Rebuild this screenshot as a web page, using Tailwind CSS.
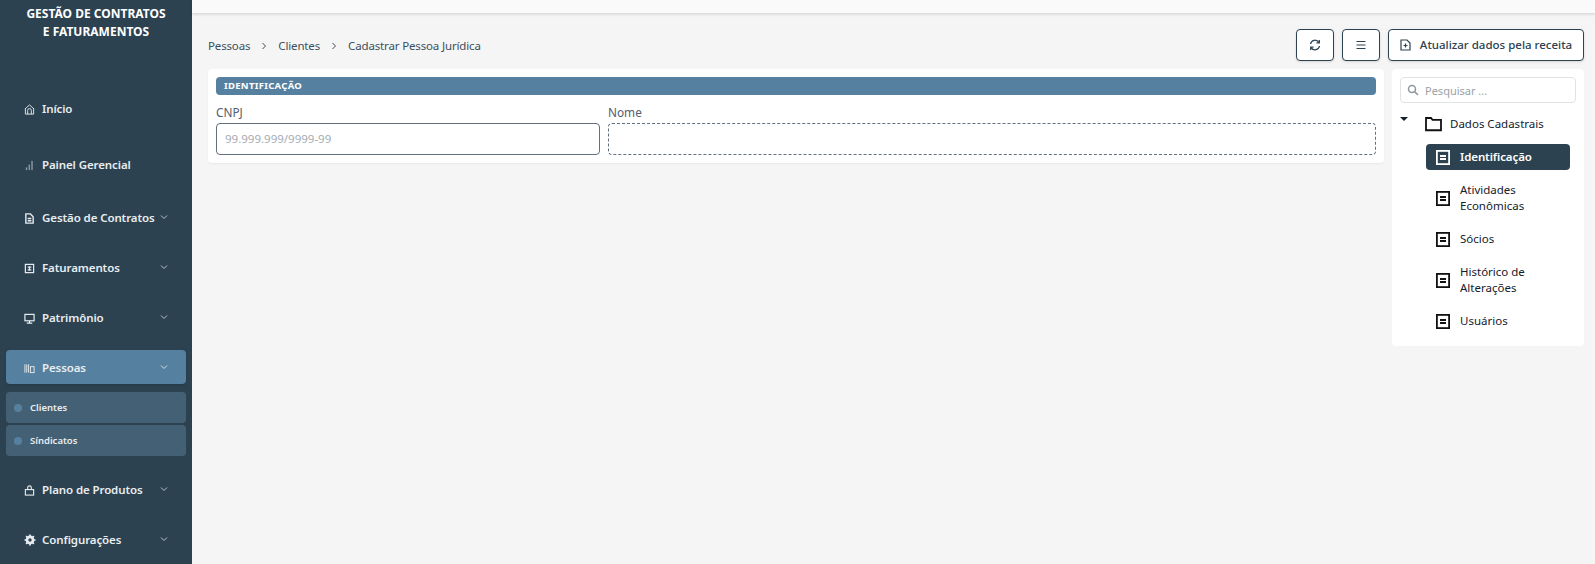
<!DOCTYPE html>
<html lang="pt-BR">
<head>
<meta charset="utf-8">
<script src="https://cdn.jsdelivr.net/npm/@tailwindcss/browser@4"></script>
</head>
<body class="m-0 overflow-hidden">
<div class="flex h-[564px] w-[1595px] bg-[#f5f5f5] font-['Noto_Sans','Open_Sans',sans-serif] text-[#2c4050]">
  <aside class="flex w-[192px] shrink-0 flex-col bg-[#2c4251] text-white">
    <div class="h-[91px] pt-[5px] text-center text-[12px] font-bold leading-[18px]">GESTÃO DE CONTRATOS<br>E FATURAMENTOS</div>
    <nav class="flex flex-col text-[11.5px] font-semibold tracking-[-0.1px] text-[#e8edf0]">
      <a class="flex h-[34px] items-center pl-[24px] pt-[2px]">
        <svg class="mr-[7px] h-[11px] w-[11px]" viewBox="0 0 12 12" fill="none" stroke="currentColor" stroke-width="1"><path d="M1 5.500 6 1l5 4.500M1.500 5v6h9V5M4 11V7a2 2 0 0 1 4 0v4"/></svg>Início</a>
      <a class="mt-[22px] flex h-[34px] items-center pl-[24px] pt-[2px]">
        <svg class="mr-[7px] h-[11px] w-[11px] text-[#8d9ba5]" viewBox="0 0 12 12" fill="currentColor"><rect x="2" y="8" width="1.500" height="3"/><rect x="5" y="5" width="1.500" height="6"/><rect x="8" y="1" width="1.500" height="10"/></svg>Painel Gerencial</a>
      <a class="mt-[19px] flex h-[34px] items-center pl-[24px] pt-[2px]">
        <svg class="mr-[7px] h-[11px] w-[11px]" viewBox="0 0 12 12" fill="none" stroke="currentColor" stroke-width="1.500"><path d="M2 1h5l3 3v7H2zM4 6h4M4 8.500h4"/></svg>Gestão de Contratos
        <svg class="-mt-[2px] ml-auto mr-[24px] h-[8px] w-[8px]" viewBox="0 0 8 8" fill="none" stroke="#b9c3ca" stroke-width="1"><path d="m1 2.500 3 3 3-3"/></svg></a>
      <a class="mt-[16px] flex h-[34px] items-center pl-[24px] pt-[2px]">
        <svg class="mr-[7px] h-[11px] w-[11px]" viewBox="0 0 12 12" fill="none" stroke="currentColor" stroke-width="1.300"><rect x="1.500" y="1.500" width="9" height="9"/><path d="M4 4.500h4M4 7.500h4M6 3.500v5"/></svg>Faturamentos
        <svg class="-mt-[2px] ml-auto mr-[24px] h-[8px] w-[8px]" viewBox="0 0 8 8" fill="none" stroke="#b9c3ca" stroke-width="1"><path d="m1 2.500 3 3 3-3"/></svg></a>
      <a class="mt-[16px] flex h-[34px] items-center pl-[24px] pt-[2px]">
        <svg class="mr-[7px] h-[11px] w-[11px]" viewBox="0 0 12 12" fill="none" stroke="currentColor" stroke-width="1.300"><rect x="1" y="1.500" width="10" height="7"/><path d="M6 8.500v2M3 11h6"/></svg>Patrimônio
        <svg class="-mt-[2px] ml-auto mr-[24px] h-[8px] w-[8px]" viewBox="0 0 8 8" fill="none" stroke="#b9c3ca" stroke-width="1"><path d="m1 2.500 3 3 3-3"/></svg></a>
      <a class="mx-[6px] mt-[16px] flex h-[34px] items-center rounded-[4px] bg-[#56809f] pl-[18px] pt-[2px] shadow-sm">
        <svg class="mr-[7px] h-[11px] w-[11px]" viewBox="0 0 12 12" fill="none" stroke="currentColor" stroke-width="1"><path d="M1 1.500v9M3 1.500v9M5 1.500v9"/><rect x="7" y="4" width="4" height="6.500"/></svg>Pessoas
        <svg class="-mt-[2px] ml-auto mr-[18px] h-[8px] w-[8px]" viewBox="0 0 8 8" fill="none" stroke="#d4dde4" stroke-width="1"><path d="m1 2.500 3 3 3-3"/></svg></a>
      <a class="mx-[6px] mt-[8px] flex h-[31px] items-center rounded-[4px] bg-[#436074] pl-[8px] pt-[1px] text-[9.500px] tracking-normal">
        <span class="mr-[8px] h-[8px] w-[8px] rounded-full bg-[#56809f]"></span>Clientes</a>
      <a class="mx-[6px] mt-[2px] flex h-[31px] items-center rounded-[4px] bg-[#436074] pl-[8px] pt-[1px] text-[9.500px] tracking-normal">
        <span class="mr-[8px] h-[8px] w-[8px] rounded-full bg-[#56809f]"></span>Síndicatos</a>
      <a class="mt-[16px] flex h-[34px] items-center pl-[24px] pt-[2px]">
        <svg class="mr-[7px] h-[11px] w-[11px]" viewBox="0 0 12 12" fill="none" stroke="currentColor" stroke-width="1.200"><rect x="1.500" y="5" width="9" height="6"/><path d="M4 5V3a2 2 0 0 1 4 0v2"/></svg>Plano de Produtos
        <svg class="-mt-[2px] ml-auto mr-[24px] h-[8px] w-[8px]" viewBox="0 0 8 8" fill="none" stroke="#b9c3ca" stroke-width="1"><path d="m1 2.500 3 3 3-3"/></svg></a>
      <a class="mt-[16px] flex h-[34px] items-center pl-[24px] pt-[2px]">
        <svg class="mr-[6px] h-[12px] w-[12px]" viewBox="0 0 12 12"><circle cx="6" cy="6" r="3.300" fill="none" stroke="currentColor" stroke-width="2.200"/><path d="M6 .5v11M.5 6h11M2.100 2.100l7.800 7.800M9.900 2.100l-7.800 7.800" stroke="currentColor" stroke-width="1.700"/><circle cx="6" cy="6" r="1.700" fill="#2c4251"/></svg>Configurações
        <svg class="-mt-[2px] ml-auto mr-[24px] h-[8px] w-[8px]" viewBox="0 0 8 8" fill="none" stroke="#b9c3ca" stroke-width="1"><path d="m1 2.500 3 3 3-3"/></svg></a>
    </nav>
  </aside>
  <main class="flex min-w-0 flex-1 flex-col">
    <header class="h-[13px] bg-[#fafafa] shadow-[0_1px_3px_rgba(0,0,0,0.16)]"></header>
    <div class="flex items-center justify-between pl-[16px] pr-[11px] pt-[16px]">
      <div class="flex items-center pt-[2px] text-[11.500px] tracking-[-0.15px] text-[#3d4f5c]">
        <span>Pessoas</span>
        <svg class="mx-[10px] h-[8px] w-[8px]" viewBox="0 0 8 8" fill="none" stroke="#3d4f5c" stroke-width="1"><path d="m2.500 1 3 3-3 3"/></svg>
        <span>Clientes</span>
        <svg class="mx-[10px] h-[8px] w-[8px]" viewBox="0 0 8 8" fill="none" stroke="#3d4f5c" stroke-width="1"><path d="m2.500 1 3 3-3 3"/></svg>
        <span>Cadastrar Pessoa Jurídica</span>
      </div>
      <div class="flex items-center gap-[8px]">
        <button class="flex h-[32px] w-[38px] items-center justify-center rounded-[4px] border border-[#2c4251] bg-white shadow-sm">
          <svg class="h-[12px] w-[12px]" viewBox="0 0 12 12" fill="none" stroke="#2c4251" stroke-width="1.300"><path d="M1.500 5A4.500 4.500 0 0 1 9.800 3.400M10.500 7A4.500 4.500 0 0 1 2.200 8.600"/><path d="M10.300 1v2.800H7.500M1.700 11V8.200h2.800"/></svg>
        </button>
        <button class="flex h-[32px] w-[38px] items-center justify-center rounded-[4px] border border-[#2c4251] bg-white shadow-sm">
          <svg class="h-[12px] w-[12px]" viewBox="0 0 12 12" fill="none" stroke="#2c4251" stroke-width="1.100"><path d="M1.500 2.500h9M1.500 6h9M1.500 9.500h9"/></svg>
        </button>
        <button class="flex h-[32px] w-[196px] items-center justify-center rounded-[4px] border border-[#2c4251] bg-white text-[11.500px] font-medium text-[#2c4251] shadow-sm">
          <svg class="mr-[9px] h-[12px] w-[11px]" viewBox="0 0 11 12" fill="none" stroke="#2c4251" stroke-width="1.200"><path d="M1 1h6l3 3v7H1zM5.500 4.500v4M3.500 6.500h4"/></svg>Atualizar dados pela receita
        </button>
      </div>
    </div>
    <div class="flex items-start gap-[8px] pl-[16px] pr-[11px] pt-[8px]">
      <section class="h-[94px] flex-1 rounded-[4px] bg-white p-[8px] shadow-[0_1px_2px_rgba(0,0,0,0.06)]">
        <div class="flex h-[18px] items-center rounded-[4px] bg-[#56809f] pl-[8px] text-[9.500px] font-bold tracking-[0.3px] text-white">IDENTIFICAÇÃO</div>
        <div class="mt-[8px] flex gap-[8px]">
          <div class="w-[384px]">
            <div class="h-[20px] pt-[1px] text-[11.800px] leading-[16px] text-[#52606c]">CNPJ</div>
            <div class="flex h-[32px] items-center rounded-[4px] border border-[#64707c] pl-[8px] text-[11.500px] text-[#a5acb3]">99.999.999/9999-99</div>
          </div>
          <div class="flex-1">
            <div class="h-[20px] pt-[1px] text-[11.800px] leading-[16px] text-[#52606c]">Nome</div>
            <div class="h-[32px] rounded-[4px] border border-dashed border-[#64707c]"></div>
          </div>
        </div>
      </section>
      <aside class="h-[277px] w-[192px] rounded-[4px] bg-white px-[8px] pt-[8px] text-[#15202b]">
        <div class="flex h-[26px] items-center rounded-[4px] border border-[#dfe3e6] pl-[6px] pt-[2px] text-[11px] text-[#9aa1a8]">
          <svg class="-mt-[2px] mr-[6px] h-[12px] w-[12px]" viewBox="0 0 12 12" fill="none" stroke="#8f979e" stroke-width="1.500"><circle cx="5" cy="5" r="3.500"/><path d="m7.600 7.600 3.400 3.400"/></svg>Pesquisar ...
        </div>
        <div class="relative mt-[9px] flex h-[22px] items-center pl-[25px] pt-[2px] text-[11.500px]">
          <span class="absolute left-0 top-[5px] h-0 w-0 border-x-[4px] border-t-[4px] border-x-transparent border-t-[#15202b]"></span>
          <svg class="-mt-[1px] mr-[8px] h-[16px] w-[17px]" viewBox="0 0 17 16" fill="none" stroke="#111" stroke-width="1.800"><path d="M1 14.250V2h5l1.500 1.800h8.500v10.450z"/></svg>Dados Cadastrais
        </div>
        <div class="ml-[26px] mr-[6px] mt-[10px] flex h-[26px] items-center rounded-[4px] bg-[#2c4251] pl-[10px] text-[11.500px] font-semibold tracking-[-0.1px] text-white">
          <svg class="mr-[10px] h-[15px] w-[14px]" viewBox="0 0 14 15" fill="none" stroke="currentColor" stroke-width="1.800"><rect x=".9" y=".9" width="12.200" height="13.200"/><path d="M4 6h6M4 9h6"/></svg>Identificação
        </div>
        <div class="ml-[26px] mr-[6px] mt-[12px] flex h-[32px] items-center pl-[10px] text-[11.500px] leading-[16px]">
          <svg class="mr-[10px] h-[15px] w-[14px] shrink-0" viewBox="0 0 14 15" fill="none" stroke="#111" stroke-width="1.800"><rect x=".9" y=".9" width="12.200" height="13.200"/><path d="M4 6h6M4 9h6"/></svg><span class="w-[80px]">Atividades Econômicas</span>
        </div>
        <div class="ml-[26px] mr-[6px] mt-[12px] flex h-[26px] items-center pl-[10px] text-[11.500px]">
          <svg class="mr-[10px] h-[15px] w-[14px] shrink-0" viewBox="0 0 14 15" fill="none" stroke="#111" stroke-width="1.800"><rect x=".9" y=".9" width="12.200" height="13.200"/><path d="M4 6h6M4 9h6"/></svg>Sócios
        </div>
        <div class="ml-[26px] mr-[6px] mt-[12px] flex h-[32px] items-center pl-[10px] text-[11.500px] leading-[16px]">
          <svg class="mr-[10px] h-[15px] w-[14px] shrink-0" viewBox="0 0 14 15" fill="none" stroke="#111" stroke-width="1.800"><rect x=".9" y=".9" width="12.200" height="13.200"/><path d="M4 6h6M4 9h6"/></svg><span class="w-[80px]">Histórico de Alterações</span>
        </div>
        <div class="ml-[26px] mr-[6px] mt-[12px] flex h-[26px] items-center pl-[10px] text-[11.500px]">
          <svg class="mr-[10px] h-[15px] w-[14px] shrink-0" viewBox="0 0 14 15" fill="none" stroke="#111" stroke-width="1.800"><rect x=".9" y=".9" width="12.200" height="13.200"/><path d="M4 6h6M4 9h6"/></svg>Usuários
        </div>
      </aside>
    </div>
  </main>
</div>
</body>
</html>
